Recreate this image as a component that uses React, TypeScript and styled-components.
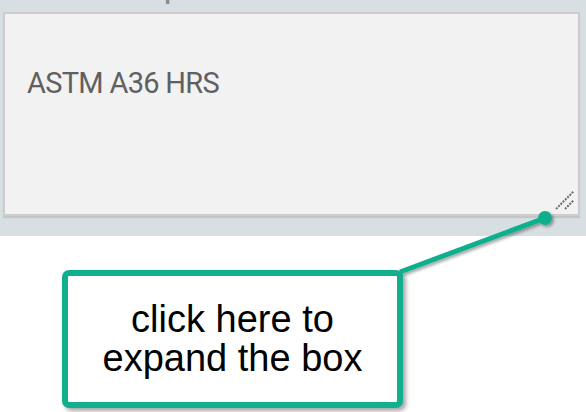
import React from 'react';
import styled, { createGlobalStyle } from 'styled-components';

const GlobalStyle = createGlobalStyle`
    html, body {
        margin: 0;
        padding: 0;
        background: #ffffff;
    }
`

const Page = styled.div`
    position: relative;
    width: 586px;
    height: 412px;
    overflow: hidden;
    font-family: "Liberation Sans", Arial, sans-serif;
`

const FieldPanel = styled.div`
    display: flex;
    flex-direction: column;
    height: 236px;
    padding: 0 6px 0 3px;
    box-sizing: border-box;
    background: #d7dfe2;
    overflow: hidden;
`

const FieldLabel = styled.div`
    margin: -25px 0 9px 82px;
    height: 28px;
    font-family: Roboto, "Noto Sans", sans-serif;
    font-size: 28px;
    font-weight: 500;
    line-height: 28px;
    color: #8a8a8a;
`

const TextBox = styled.div`
    position: relative;
    height: 204px;
    padding: 52px 22px 0;
    box-sizing: border-box;
    background: #f2f2f2;
    border: 2px solid #cdcdcd;
    box-shadow: 0 2px 1px #c2c6c8;
    font-family: Roboto, "Noto Sans", sans-serif;
    font-size: 29px;
    font-weight: 400;
    line-height: 34px;
    letter-spacing: -0.7px;
    color: #606060;
`

const ResizeGrip = styled.svg`
    position: absolute;
    right: 3px;
    bottom: 4px;
    width: 20px;
    height: 20px;
`

const CalloutArea = styled.div`
    display: flex;
    padding: 34px 0 0 62px;
`

const CalloutBox = styled.div`
    display: flex;
    align-items: center;
    justify-content: center;
    width: 341px;
    height: 138px;
    box-sizing: border-box;
    border: 6px solid #10af8d;
    border-radius: 7px;
    background: #ffffff;
    box-shadow: 3px 3px 4px rgba(0, 0, 0, 0.35);
    font-size: 38px;
    line-height: 39px;
    text-align: center;
    color: #000000;
`

const Connector = styled.svg`
    position: absolute;
    left: 0;
    top: 0;
    width: 586px;
    height: 412px;
    pointer-events: none;
`

export default function App() {
    return (
        <Page>
            <GlobalStyle />
            <FieldPanel>
                <FieldLabel>Description</FieldLabel>
                <TextBox>
                    ASTM A36 HRS
                    <ResizeGrip viewBox="0 0 20 20">
                        <line x1="1" y1="19" x2="19" y2="1" stroke="#6e6e6e" strokeWidth="2" strokeDasharray="2 1.2" />
                        <line x1="10" y1="19" x2="19" y2="10" stroke="#6e6e6e" strokeWidth="2" strokeDasharray="2 1.2" />
                    </ResizeGrip>
                </TextBox>
            </FieldPanel>
            <CalloutArea>
                <CalloutBox>
                    click here to<br />expand the box
                </CalloutBox>
            </CalloutArea>
            <Connector viewBox="0 0 586 412">
                <defs>
                    <filter id="shade" x="-10%" y="-10%" width="130%" height="140%">
                        <feDropShadow dx="2" dy="2" stdDeviation="1.5" floodColor="#000" floodOpacity="0.35" />
                    </filter>
                </defs>
                <g filter="url(#shade)">
                    <line x1="545" y1="218" x2="400" y2="272" stroke="#10af8d" strokeWidth="5" />
                    <circle cx="545" cy="218" r="7" fill="#10af8d" />
                </g>
            </Connector>
        </Page>
    );
}
